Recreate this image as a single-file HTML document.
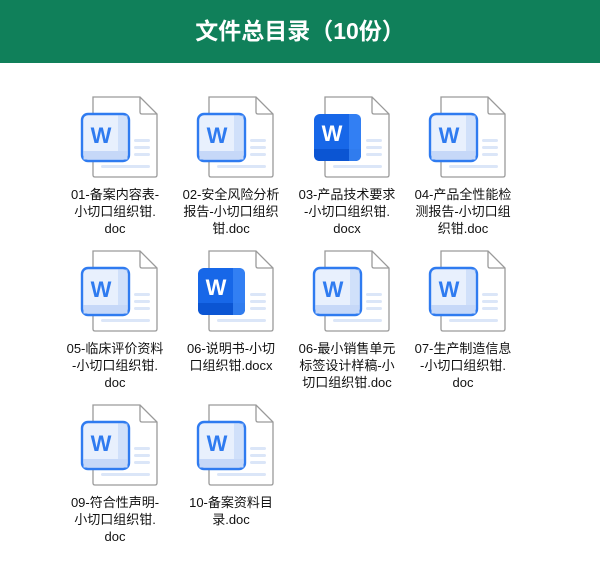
<!DOCTYPE html>
<html><head><meta charset="utf-8"><style>
body{margin:0;width:600px;height:570px;background:#fff;font-family:"Liberation Sans","Noto Sans CJK SC",sans-serif;position:relative;overflow:hidden}
.hd{position:absolute;left:0;top:0;width:600px;height:63px;background:#10805a;color:#fff;font-size:23px;font-weight:bold;text-align:center;line-height:63px}
.c{position:absolute;width:116px}
.c svg{position:absolute;left:22px;top:0}
.c .t{position:absolute;top:91px;left:0;width:116px;text-align:center;font-size:13px;line-height:17px;color:#111;white-space:nowrap}
</style></head><body>
<div class="hd">文件总目录（10份）</div>
<svg width="0" height="0" style="position:absolute">
<defs>
<g id="pg">
<path d="M14 2 H61 L78 19 V80 Q78 82 76 82 H16 Q14 82 14 80 Z" fill="#fff" stroke="#9a9a9a" stroke-width="1.3"/>
<path d="M61 2 V17 Q61 19 63 19 H78" fill="none" stroke="#9a9a9a" stroke-width="1.3"/>
<g fill="#dbe6f8"><rect x="55" y="44" width="16" height="3" rx="1.5"/><rect x="55" y="51" width="16" height="3" rx="1.5"/><rect x="55" y="58" width="16" height="3" rx="1.5"/><rect x="22" y="70" width="49" height="3" rx="1.5"/></g>
</g>
<g id="w1"><use href="#pg"/>
<rect x="3" y="19" width="47" height="47" rx="6" fill="#e8f0fd" stroke="#2f7bf0" stroke-width="2.4"/>
<rect x="4.5" y="56" width="44" height="8.5" fill="#c6d8f8"/><rect x="39" y="20.5" width="9.5" height="44" fill="#c6d8f8" opacity=".7"/>
<text x="22" y="48" font-family="Liberation Sans" font-weight="bold" font-size="22" fill="#2f7bf0" text-anchor="middle">W</text></g>
<g id="w2"><use href="#pg"/>
<rect x="3" y="19" width="47" height="47" rx="6" fill="#1767e8"/>
<path d="M3 54 H50 V60 Q50 66 44 66 H9 Q3 66 3 60 Z" fill="#0b55d3"/><path d="M38 19 H44 Q50 19 50 25 V60 Q50 66 44 66 H38 Z" fill="#3a86f5" opacity=".8"/>
<text x="21" y="46" font-family="Liberation Sans" font-weight="bold" font-size="22" fill="#fff" text-anchor="middle">W</text></g>
</defs></svg>

<div class="c" style="left:57px;top:95px"><svg width="80" height="86"><use href="#w1"/></svg><div class="t">01-备案内容表-<br>小切口组织钳.<br>doc</div></div>
<div class="c" style="left:173px;top:95px"><svg width="80" height="86"><use href="#w1"/></svg><div class="t">02-安全风险分析<br>报告-小切口组织<br>钳.doc</div></div>
<div class="c" style="left:289px;top:95px"><svg width="80" height="86"><use href="#w2"/></svg><div class="t">03-产品技术要求<br>-小切口组织钳.<br>docx</div></div>
<div class="c" style="left:405px;top:95px"><svg width="80" height="86"><use href="#w1"/></svg><div class="t">04-产品全性能检<br>测报告-小切口组<br>织钳.doc</div></div>
<div class="c" style="left:57px;top:249px"><svg width="80" height="86"><use href="#w1"/></svg><div class="t">05-临床评价资料<br>-小切口组织钳.<br>doc</div></div>
<div class="c" style="left:173px;top:249px"><svg width="80" height="86"><use href="#w2"/></svg><div class="t">06-说明书-小切<br>口组织钳.docx</div></div>
<div class="c" style="left:289px;top:249px"><svg width="80" height="86"><use href="#w1"/></svg><div class="t">06-最小销售单元<br>标签设计样稿-小<br>切口组织钳.doc</div></div>
<div class="c" style="left:405px;top:249px"><svg width="80" height="86"><use href="#w1"/></svg><div class="t">07-生产制造信息<br>-小切口组织钳.<br>doc</div></div>
<div class="c" style="left:57px;top:403px"><svg width="80" height="86"><use href="#w1"/></svg><div class="t">09-符合性声明-<br>小切口组织钳.<br>doc</div></div>
<div class="c" style="left:173px;top:403px"><svg width="80" height="86"><use href="#w1"/></svg><div class="t">10-备案资料目<br>录.doc</div></div>
</body></html>
